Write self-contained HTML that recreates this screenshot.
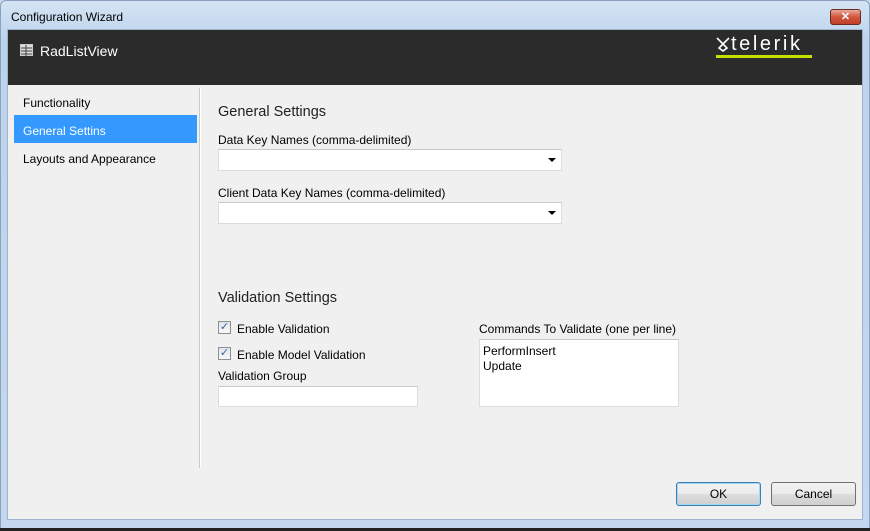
<!DOCTYPE html>
<html><head><style>
*{margin:0;padding:0;box-sizing:border-box}
body{width:870px;height:531px;background:#c7daf0;font-family:"Liberation Sans",sans-serif;font-size:12px;color:#000;position:relative;overflow:hidden}
.abs{position:absolute}
.frame{left:0;top:0;width:870px;height:529px;background:linear-gradient(#d5e4f4,#bcd3ec 40px,#c4d9ef);border:1px solid #8aa2c0;border-radius:6px 6px 0 0}
.bot{left:0;top:528px;width:870px;height:3px;background:#222}
.content{left:7px;top:29px;width:856px;height:491px;background:#f0f0f0;border:1px solid #9fb3cc}
.hdr{left:8px;top:30px;width:854px;height:55px;background:#2b2b2b}
.inp{background:#fff;border:1px solid #dcdcdc;border-top-color:#c8c8c8}
.arr{position:absolute;right:5px;top:8px;width:0;height:0;border-left:4px solid transparent;border-right:4px solid transparent;border-top:4px solid #000}
.cb{width:13px;height:13px;border:1px solid #8e8f8f;background:linear-gradient(#dfe6ee,#f7f8f9);font-size:11px;line-height:11px;text-align:center;color:#3c5f8f}
.btn{height:24px;width:85px;border:1px solid #707070;border-radius:3px;background:linear-gradient(#f2f2f2,#ebebeb 50%,#dddddd 50%,#cfcfcf);text-align:center;line-height:22px;font-size:12px}
</style></head><body>
<div class="abs frame"></div>
<div class="abs bot"></div>
<div class="abs" style="left:11px;top:10px;font-size:12px;color:#000">Configuration Wizard</div>
<div class="abs" style="left:830px;top:9px;width:31px;height:16px;border:1px solid #6d2a20;border-radius:3px;background:linear-gradient(#e9a99c,#d0553f 50%,#c03e28);color:#fff;font-weight:bold;font-size:11px;text-align:center;line-height:14px">✕</div>
<div class="abs content"></div>
<div class="abs hdr"></div>
<svg class="abs" style="left:20px;top:44px" width="13" height="12" viewBox="0 0 13 12"><rect x="0.5" y="0.5" width="12" height="11" fill="#ddd" stroke="#ccc"/><path d="M1 4h11M1 7h11M1 10h11M6 1v11" stroke="#444" stroke-width="1"/></svg>
<div class="abs" style="left:40px;top:43px;font-size:14px;color:#fff">RadListView</div>
<svg class="abs" style="left:716px;top:37px" width="14" height="15" viewBox="0 0 14 15"><path d="M1 1L7 7L13 1M7 7L3 11L7 14L11 11Z" fill="none" stroke="#fff" stroke-width="1.6"/></svg>
<div class="abs" style="left:731px;top:33px;font-size:20px;color:#fff;letter-spacing:2.6px">telerik</div>
<div class="abs" style="left:716px;top:55px;width:96px;height:3px;background:#c6e000"></div>
<div class="abs" style="left:199px;top:88px;width:1px;height:380px;background:#c8c8c8"></div>
<div class="abs" style="left:200px;top:88px;width:1px;height:380px;background:#fff"></div>
<div class="abs" style="left:23px;top:96px;font-size:12px">Functionality</div>
<div class="abs" style="left:14px;top:115px;width:183px;height:28px;background:#3399ff"></div>
<div class="abs" style="left:23px;top:124px;color:#fff">General Settins</div>
<div class="abs" style="left:23px;top:152px">Layouts and Appearance</div>
<div class="abs" style="left:218px;top:104px;font-size:14.5px;color:#222">General Settings</div>
<div class="abs" style="left:218px;top:133px">Data Key Names (comma-delimited)</div>
<div class="abs inp" style="left:218px;top:149px;width:344px;height:22px"><div class="arr"></div></div>
<div class="abs" style="left:218px;top:186px">Client Data Key Names (comma-delimited)</div>
<div class="abs inp" style="left:218px;top:202px;width:344px;height:22px"><div class="arr"></div></div>
<div class="abs" style="left:218px;top:290px;font-size:14.5px;color:#222">Validation Settings</div>
<div class="abs cb" style="left:218px;top:321px">✓</div>
<div class="abs" style="left:237px;top:322px">Enable Validation</div>
<div class="abs cb" style="left:218px;top:347px">✓</div>
<div class="abs" style="left:237px;top:348px">Enable Model Validation</div>
<div class="abs" style="left:218px;top:369px">Validation Group</div>
<div class="abs inp" style="left:218px;top:386px;width:200px;height:21px"></div>
<div class="abs" style="left:479px;top:322px">Commands To Validate (one per line)</div>
<div class="abs inp" style="left:479px;top:339px;width:200px;height:68px;padding:4px 3px;line-height:15px">PerformInsert<br>Update</div>
<div class="abs btn" style="left:676px;top:482px;border-color:#3c7fb1;box-shadow:inset 0 0 0 1px #9fd5f5">OK</div>
<div class="abs btn" style="left:771px;top:482px">Cancel</div>
</body></html>
